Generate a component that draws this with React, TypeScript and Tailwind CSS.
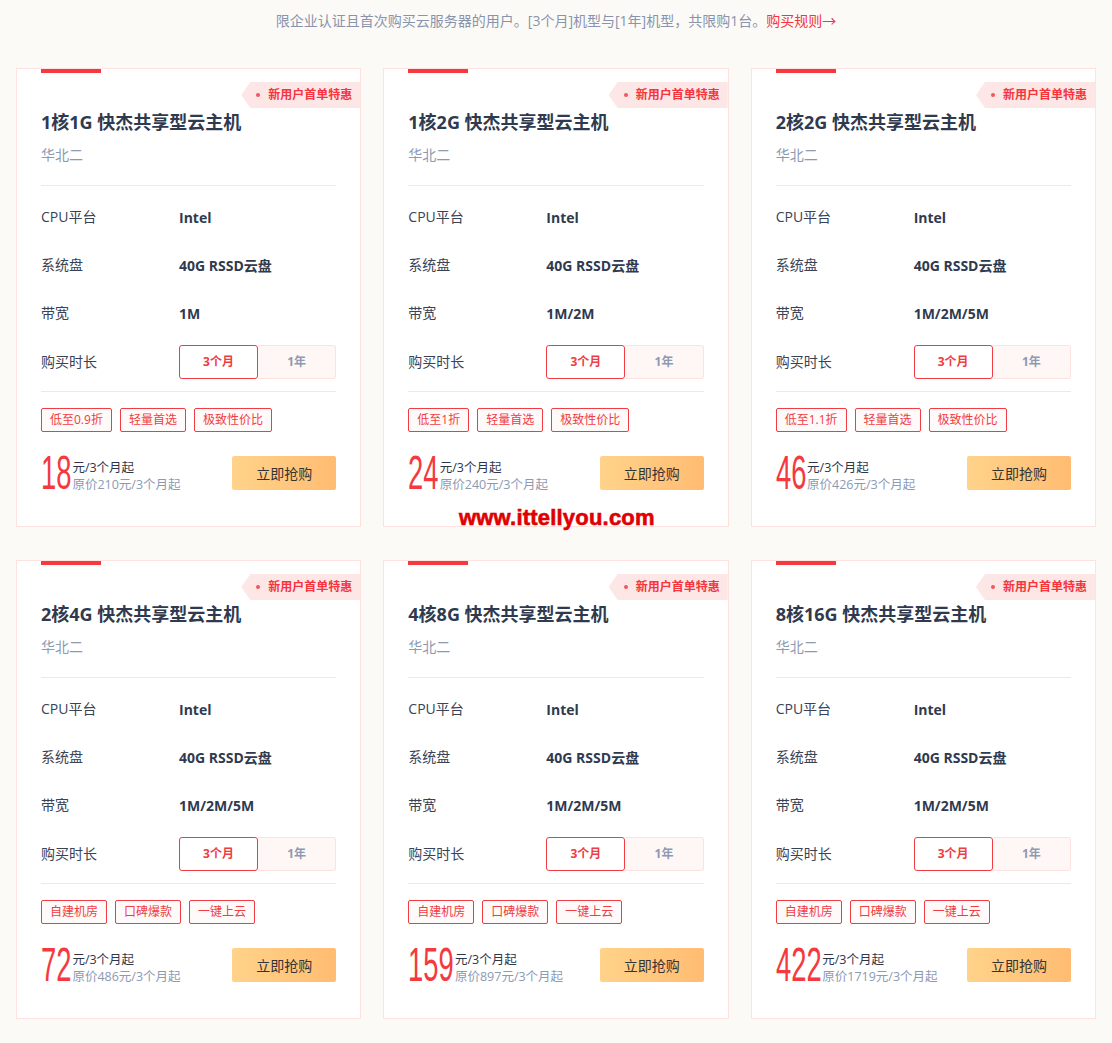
import React from "react";

type Plan = {
  title: string;
  bw: string;
  tags: string[];
  price: string;
  orig: string;
};

const plans: Plan[] = [
  { title: "1核1G 快杰共享型云主机", bw: "1M", tags: ["低至0.9折", "轻量首选", "极致性价比"], price: "18", orig: "210" },
  { title: "1核2G 快杰共享型云主机", bw: "1M/2M", tags: ["低至1折", "轻量首选", "极致性价比"], price: "24", orig: "240" },
  { title: "2核2G 快杰共享型云主机", bw: "1M/2M/5M", tags: ["低至1.1折", "轻量首选", "极致性价比"], price: "46", orig: "426" },
  { title: "2核4G 快杰共享型云主机", bw: "1M/2M/5M", tags: ["自建机房", "口碑爆款", "一键上云"], price: "72", orig: "486" },
  { title: "4核8G 快杰共享型云主机", bw: "1M/2M/5M", tags: ["自建机房", "口碑爆款", "一键上云"], price: "159", orig: "897" },
  { title: "8核16G 快杰共享型云主机", bw: "1M/2M/5M", tags: ["自建机房", "口碑爆款", "一键上云"], price: "422", orig: "1719" },
];

const FONT = { fontFamily: '"Open Sans", "Noto Sans CJK SC", sans-serif' };

function Row({ label, children, tall }: { label: string; children: React.ReactNode; tall?: boolean }) {
  return (
    <div className={tall ? "flex h-[50px] items-center" : "flex h-[48px] items-center"}>
      <div className="w-[138px] text-[14px] leading-[20px] text-[#3a4356]">{label}</div>
      <div className="flex-1">{children}</div>
    </div>
  );
}

function Card({ p }: { p: Plan }) {
  return (
    <div className="relative border border-[#fde2e0] bg-white px-[24px] pb-[36px]">
      <div className="h-[4px] w-[60px] bg-[#f5393f]" />
      <div className="absolute right-0 top-[13px] flex h-[26px] items-center bg-[#fde6e6] pl-[15px] pr-[8px] [clip-path:polygon(9px_0,100%_0,100%_100%,9px_100%,0_50%)]">
        <span className="mr-[8px] h-[4px] w-[4px] rounded-full bg-[#f5565b]" />
        <span className="text-[12px] font-semibold leading-[26px] text-[#f5343d]">新用户首单特惠</span>
      </div>
      <div className="mt-[36px] text-[18px] font-bold leading-[26px] text-[#303a4f]">{p.title}</div>
      <div className="mt-[10px] text-[14px] leading-[20px] text-[#8d9ab2]">华北二</div>
      <div className="mt-[20px] h-px bg-[#fbe3e1]" />
      <div className="mt-[7px]">
        <Row label="CPU平台">
          <span className="text-[14px] font-bold leading-[20px] text-[#303a4f]">Intel</span>
        </Row>
        <Row label="系统盘">
          <span className="text-[14px] font-bold leading-[20px] text-[#303a4f]">40G RSSD云盘</span>
        </Row>
        <Row label="带宽">
          <span className="text-[14px] font-bold leading-[20px] text-[#303a4f]">{p.bw}</span>
        </Row>
        <Row label="购买时长" tall>
          <div className="flex h-[34px] w-full">
            <div className="flex w-[79px] items-center justify-center rounded-[3px] border border-[#f03c42] bg-white text-[12px] font-bold text-[#f03c42]">
              3个月
            </div>
            <div className="flex flex-1 items-center justify-center rounded-r-[3px] border border-l-0 border-[#fde2e0] bg-[#fff6f6] text-[12px] font-bold text-[#8d9ab2]">
              1年
            </div>
          </div>
        </Row>
      </div>
      <div className="mt-[4px] h-px bg-[#fbe3e1]" />
      <div className="mt-[16px] flex gap-[8px]">
        {p.tags.map((t) => (
          <span
            key={t}
            className="flex h-[24px] items-center rounded-[2px] border border-[#f03c42] bg-[#fffafa] px-[8px] text-[12px] leading-[16px] text-[#f03c42]"
          >
            {t}
          </span>
        ))}
      </div>
      <div className="mt-[24px] flex h-[34px] items-center justify-between">
        <div className="flex items-center">
          <span
            className="inline-block origin-left scale-x-[0.57] text-[48px] leading-[34px] text-[#f43a40]"
            style={{ fontFamily: '"Liberation Sans", sans-serif', marginRight: -p.price.length * 11.5 + 1 }}
          >
            {p.price}
          </span>
          <div className="flex flex-col pt-[5px] text-[12.5px] leading-[17px]">
            <span className="text-[#2e3648]">元/3个月起</span>
            <span className="text-[#8d9ab2]">原价{p.orig}元/3个月起</span>
          </div>
        </div>
        <button className="h-[34px] w-[104px] rounded-[2px] bg-gradient-to-r from-[#ffd38a] to-[#ffbc72] text-[14px] text-[#333]">
          立即抢购
        </button>
      </div>
    </div>
  );
}

export default function App() {
  return (
    <div className="relative min-h-[1043px] bg-[#fcfaf7]" style={FONT}>
      <div className="pt-[11px] text-center text-[14px] leading-[20px] text-[#8893ad]">
        限企业认证且首次购买云服务器的用户。[3个月]机型与[1年]机型，共限购1台。
        <span className="text-[#f5343d]">购买规则→</span>
      </div>
      <div className="mx-auto mt-[37px] grid w-[1080px] grid-cols-3 gap-x-[22px] gap-y-[33px]">
        {plans.map((p) => (
          <Card key={p.title} p={p} />
        ))}
      </div>
      <div
        className="absolute left-[459px] top-[506px] text-[22px] font-bold leading-[24px] tracking-[0.2px] text-[#e00000] [-webkit-text-stroke:0.6px_#e00000]"
        style={{ fontFamily: '"Liberation Sans", Arial, sans-serif' }}
      >
        www.ittellyou.com
      </div>
    </div>
  );
}
